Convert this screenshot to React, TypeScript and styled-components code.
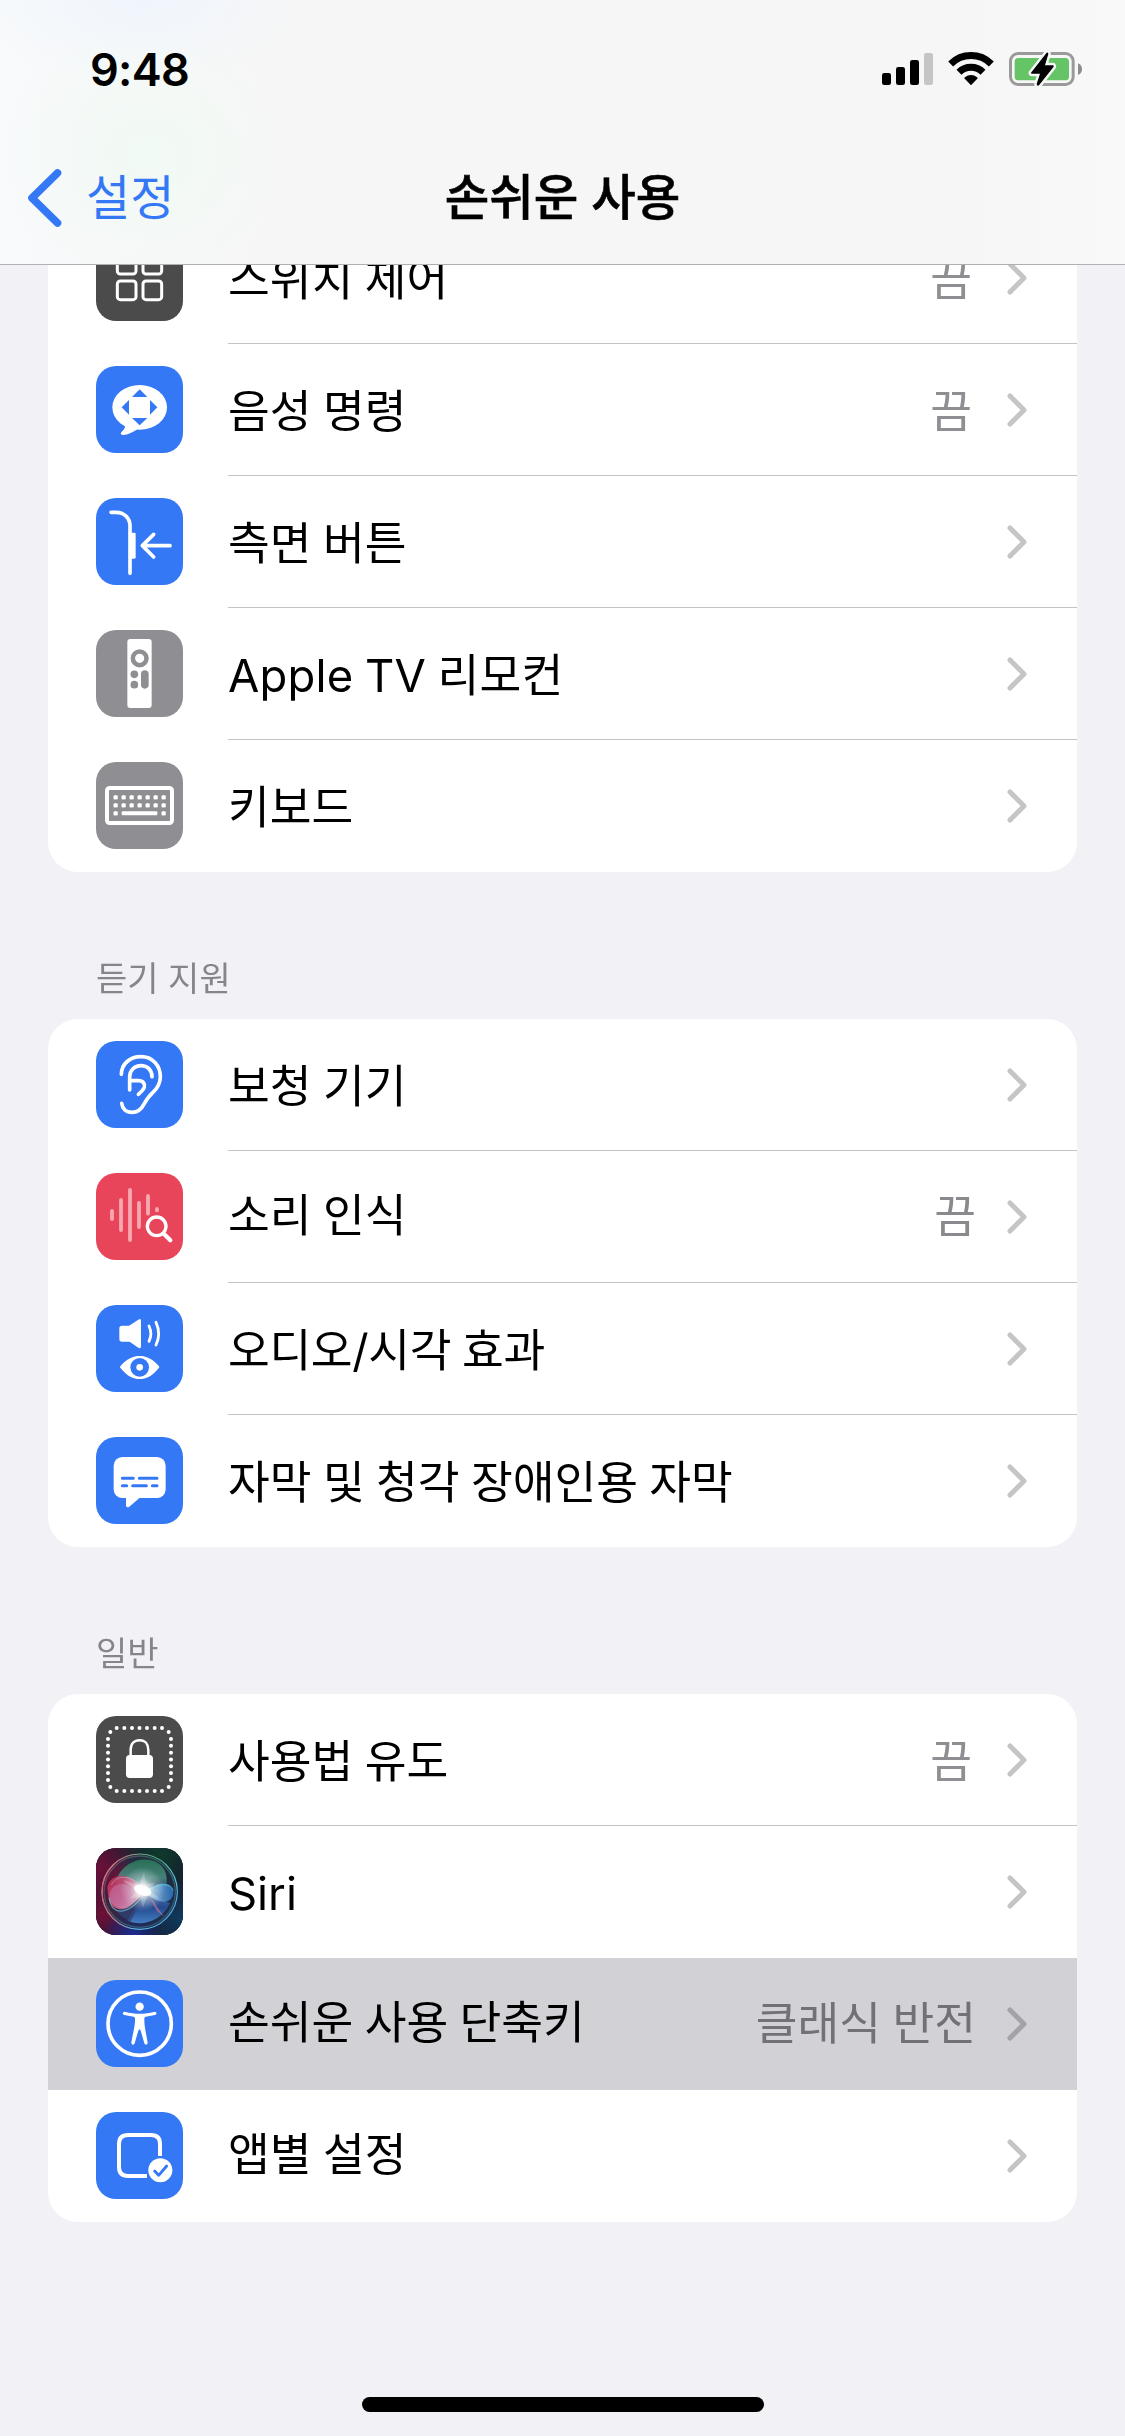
import React from "react";
import styled, { createGlobalStyle } from "styled-components";

const GlobalStyle = createGlobalStyle`
  * { box-sizing: border-box; }
  body {
    margin: 0;
    background: #f1f1f6;
    font-family: Inter, "Noto Sans CJK KR", sans-serif;
    color: #000;
  }
`;

const BLUE = "#3478f6";
const DARK = "#4b4b4b";
const GRAY = "#8e8e93";
const RED = "#e9455a";

const Screen = styled.div`
  width: 1125px;
  height: 2436px;
  display: flex;
  flex-direction: column;
  overflow: hidden;
  background: #f1f1f6;
`;

const Header = styled.header`
  flex: none;
  height: 265px;
  display: flex;
  flex-direction: column;
  border-bottom: 1px solid #b0b0b2;
  background:
    radial-gradient(ellipse 150px 130px at 150px 155px, rgba(240, 250, 243, 0.9), rgba(240, 250, 243, 0) 100%),
    radial-gradient(ellipse 170px 80px at 140px 0, rgba(239, 245, 253, 0.9), rgba(239, 245, 253, 0) 100%),
    linear-gradient(90deg, #f8fafb 0, #f6f6f6 280px, #f6f6f6 960px, #f9f9f9 1125px);
  z-index: 1;
`;

const StatusBar = styled.div`
  height: 132px;
  display: flex;
  justify-content: space-between;
  padding: 40px 25px 0 90px;
`;

const Clock = styled.div`
  font-size: 45px;
  font-weight: 600;
  line-height: 60px;
  letter-spacing: -0.7px;
`;

const NavBar = styled.nav`
  flex: 1;
  display: grid;
  grid-template-columns: 1fr auto 1fr;
  align-items: center;
  padding: 0 25px 0 25px;
`;

const BackButton = styled.div`
  display: flex;
  align-items: center;
  gap: 23px;
  color: ${BLUE};
  font-size: 48px;
  line-height: 64px;
`;

const Title = styled.h1`
  margin: 0;
  font-size: 48.4px;
  font-weight: 500;
  line-height: 64px;
  -webkit-text-stroke: 0.6px #000;
`;

const List = styled.main`
  flex: 1;
  min-height: 0;
  overflow: hidden;
  padding: 0 48px;
`;

const Scrolled = styled.div`
  margin-top: -53px;
`;

const SectionTitle = styled.h2`
  margin: 0;
  height: 147px;
  padding: 83px 0 0 48px;
  font-size: 34px;
  font-weight: 400;
  line-height: 48px;
  color: #85858b;
`;

const Card = styled.section`
  border-radius: 30px;
  background: #fff;
  overflow: hidden;
`;

const Row = styled.div<{ $pressed?: boolean }>`
  height: 132px;
  display: flex;
  align-items: stretch;
  padding-left: 48px;
  background: ${(p) => (p.$pressed ? "#d1d1d6" : "transparent")};
`;

const Tile = styled.div<{ $color: string }>`
  flex: none;
  width: 87px;
  height: 87px;
  margin: 22px 45px 0 0;
  border-radius: 20px;
  overflow: hidden;
  background: ${(p) => p.$color};

  svg {
    display: block;
    width: 87px;
    height: 87px;
  }
`;

const RowBody = styled.div<{ $divider: boolean }>`
  flex: 1;
  display: flex;
  align-items: center;
  padding-right: 49px;
  border-bottom: 1px solid ${(p) => (p.$divider ? "#c4c4c6" : "transparent")};
`;

const Label = styled.span<{ $raised?: boolean; $tracking?: number }>`
  flex: 1;
  font-size: 45.4px;
  line-height: 60px;
  letter-spacing: ${(p) => p.$tracking ?? 0}px;
  word-spacing: -1.4px;
  padding-top: ${(p) => (p.$raised ? 0 : 5)}px;
  padding-bottom: ${(p) => (p.$raised ? 1 : 0)}px;
  white-space: nowrap;
`;

const Value = styled(Label)<{ $inset: number }>`
  flex: none;
  padding-bottom: 0;
  color: ${(p) => (p.$raised ? "#8a8a8e" : GRAY)};
  mix-blend-mode: multiply;
  margin-right: ${(p) => p.$inset}px;
`;

const HomeArea = styled.footer`
  flex: none;
  height: 39px;
  display: flex;
  justify-content: center;
  align-items: flex-start;
`;

const HomeBar = styled.div`
  width: 402px;
  height: 15px;
  border-radius: 8px;
  background: #000;
`;

const Chevron = ({ color }: { color: string }) => (
  <svg width="22" height="36" viewBox="0 0 22 36" fill="none" stroke={color} strokeWidth="5" strokeLinecap="round" strokeLinejoin="round">
    <path d="M4 4 L18 18 L4 32" />
  </svg>
);

const BackChevron = () => (
  <svg width="38" height="60" viewBox="0 0 38 60" fill="none" stroke={BLUE} strokeWidth="7.6" strokeLinecap="round" strokeLinejoin="round">
    <path d="M32.5 5 L7 30 L32.5 55" />
  </svg>
);

const StatusIcons = () => (
  <svg width="240" height="60" viewBox="0 0 720 180">
    <rect x="66" y="99" width="27" height="36" rx="7" />
    <rect x="108" y="81" width="27" height="54" rx="7" />
    <rect x="150" y="60" width="27" height="75" rx="7" />
    <rect x="192" y="39" width="27" height="96" rx="7" fill="#c5c5c5" />
    <g fill="none" stroke="#000" strokeWidth="21">
      <path d="M272 72 A86 86 0 0 1 394 72" />
      <path d="M297 97 A51 51 0 0 1 369 97" />
    </g>
    <path d="M333 133 L315 114 Q333 100 351 114 Z" stroke="#000" strokeWidth="4" strokeLinejoin="round" />
    <rect x="451.5" y="40.5" width="188" height="93" rx="23" fill="none" stroke="#9a9a9a" strokeWidth="9" />
    <rect x="464" y="54" width="163" height="67" rx="11" fill="#65c466" />
    <path d="M654 70 Q666 75 666 87.500 Q666 100 654 105 Z" fill="#8c8c8c" />
    <path
      d="M560 38 L513 98 Q512 101 516 101 H540 L530 132 Q531 140 537 136 L581 80 Q582 76 578 76 H555 L565 42 Q565 36 560 38 Z"
      stroke="#f6f6f6"
      strokeWidth="15"
      strokeLinejoin="round"
      paintOrder="stroke"
    />
  </svg>
);

const Glyph = ({ children }: { children: React.ReactNode }) => <svg viewBox="0 0 261 261">{children}</svg>;

const SwitchGlyph = () => (
  <Glyph>
    <g fill="none" stroke="#fff" strokeWidth="9">
      {[64, 141].map((x) => [64, 141].map((y) => <rect key={`${x}-${y}`} x={x} y={y} width="56" height="56" rx="9" />))}
    </g>
  </Glyph>
);

const VoiceGlyph = () => (
  <Glyph>
    <ellipse cx="131" cy="124" rx="82" ry="67" fill="#fff" />
    <path d="M88 175 C88 188 82 193 76 199 C72 204 76 208 84 207 C98 205 113 197 126 188 Z" fill="#fff" />
    <g fill={BLUE}>
      <path d="M131 70 L154 93 H108 Z" />
      <path d="M131 178 L154 156 H108 Z" />
      <path d="M77 124 L99 102 V146 Z" />
      <path d="M184 124 L162 102 V146 Z" />
    </g>
  </Glyph>
);

const SideButtonGlyph = () => (
  <Glyph>
    <g fill="none" stroke="#fff" strokeWidth="11" strokeLinecap="round" strokeLinejoin="round">
      <path d="M45 43 H60 C84 43 102 60 102 84 V226" />
      <path d="M222 143 H140 M173 109 L139 143 L173 177" />
    </g>
    <rect x="100" y="104" width="19" height="78" rx="4" fill="#fff" />
  </Glyph>
);

const RemoteGlyph = () => (
  <Glyph>
    <rect x="94" y="27" width="73" height="207" rx="9" fill="#fff" />
    <circle cx="131" cy="85" r="20.500" fill="none" stroke={GRAY} strokeWidth="13.500" />
    <g fill={GRAY}>
      <circle cx="115" cy="133" r="11.500" />
      <circle cx="115" cy="164" r="11.500" />
      <rect x="135" y="121" width="23" height="55" rx="11.500" />
    </g>
  </Glyph>
);

const KeyboardGlyph = () => (
  <Glyph>
    <rect x="33" y="78" width="195" height="105" rx="8" fill="none" stroke="#fff" strokeWidth="12" />
    <g fill="#fff">
      {[59, 83, 107, 131, 155, 179, 203].map((x) =>
        [106, 130].map((y) => <rect key={`${x}-${y}`} x={x - 6.5} y={y - 6.5} width="13" height="13" rx="4" />)
      )}
      <rect x="52.500" y="147.500" width="13" height="13" rx="4" />
      <rect x="196.500" y="147.500" width="13" height="13" rx="4" />
      <rect x="77" y="148" width="107" height="12" rx="3" />
    </g>
  </Glyph>
);

const EarGlyph = () => (
  <Glyph>
    <g fill="none" stroke="#fff" strokeWidth="11" strokeLinecap="round" strokeLinejoin="round">
      <path d="M76 100 C76 68 103 47 135 47 C170 47 193 74 193 107 C193 130 184 142 170 155 C158 166 151 177 143 191 C136 205 125 214 108 214 C90 214 79 203 77 187" />
      <path d="M168 107 C168 87 154 74 135 74 C116 74 101 87 101 108 V147" />
      <path d="M101 119 H127 C142 119 148 129 145 139 C143 146 135 153 127 160" />
    </g>
  </Glyph>
);

const SoundGlyph = () => (
  <Glyph>
    <g stroke="#f6a7b0" strokeWidth="11.500" strokeLinecap="round">
      <path d="M48 114 V138 M75 81 V171 M102 51 V201 M129 90 V162 M156 69 V122 M183 108 V112" />
    </g>
    <circle cx="183" cy="160" r="39" fill={RED} />
    <circle cx="182" cy="160" r="28" fill="none" stroke="#fff" strokeWidth="10" />
    <path d="M204 183 L223 202" stroke="#fff" strokeWidth="12.500" strokeLinecap="round" />
  </Glyph>
);

const AudioVisualGlyph = () => (
  <Glyph>
    <path d="M78 62 H99 L127 44 Q135 39 135 48 V124 Q135 133 127 128 L101 110 H78 Q70 110 70 102 V70 Q70 62 78 62 Z" fill="#fff" />
    <g fill="none" stroke="#fff" strokeWidth="8.500" strokeLinecap="round">
      <path d="M159 63 Q170 86 159 109" />
      <path d="M180 52 Q196 86 180 120" />
    </g>
    <path d="M73 188 Q71 186 73 184 C94 160 112 153 131 153 C150 153 168 160 189 184 Q191 186 189 188 C168 214 150 222 131 222 C112 222 94 214 73 188 Z" fill="#fff" />
    <circle cx="131" cy="187" r="28" fill={BLUE} />
    <circle cx="131" cy="187" r="10" fill="#fff" />
  </Glyph>
);

const CaptionGlyph = () => (
  <Glyph>
    <rect x="53" y="60" width="156" height="123" rx="26" fill="#fff" />
    <path d="M90 180 V206 Q92 214 100 209 L133 181 Z" fill="#fff" />
    <g stroke={BLUE} strokeWidth="9" strokeLinecap="round">
      <path d="M79 124 H112 M130 124 H183 M79 146 H92 M110 146 H151 M169 146 H183" />
    </g>
  </Glyph>
);

const guidedDots: [number, number][] = [
  ...[62, 85, 108, 130.5, 153, 176, 198].flatMap((x): [number, number][] => [[x, 36], [x, 225]]),
  ...[69, 89, 110, 130.5, 151, 171, 192].flatMap((y): [number, number][] => [[36, y], [225, y]]),
  [43, 48], [218, 48], [43, 213], [218, 213],
];

const GuidedGlyph = () => (
  <Glyph>
    <g fill="#fff">
      {guidedDots.map(([x, y]) => <circle key={`${x}-${y}`} cx={x} cy={y} r="6" />)}
      <rect x="90" y="117" width="81" height="69" rx="11" />
    </g>
    <path d="M104 119 V102 C104 84 114 73 131 73 C147 73 157 84 157 102 V119" fill="none" stroke="#fff" strokeWidth="7.500" />
  </Glyph>
);

const SiriGlyph = () => (
  <Glyph>
    <defs>
      <radialGradient id="sTL"><stop offset="0" stopColor="#6d1038" /><stop offset="1" stopColor="#6d1038" stopOpacity="0" /></radialGradient>
      <radialGradient id="sTR"><stop offset="0" stopColor="#0e3a2c" /><stop offset="1" stopColor="#0e3a2c" stopOpacity="0" /></radialGradient>
      <radialGradient id="sB"><stop offset="0" stopColor="#1d2c94" /><stop offset="1" stopColor="#1d2c94" stopOpacity="0" /></radialGradient>
      <radialGradient id="sBR"><stop offset="0" stopColor="#103a5c" /><stop offset="1" stopColor="#103a5c" stopOpacity="0" /></radialGradient>
      <linearGradient id="sRing" x1="0" y1="0" x2="1" y2="1">
        <stop offset="0" stopColor="#d38c93" /><stop offset="0.350" stopColor="#5da88a" /><stop offset="0.700" stopColor="#57c0d0" /><stop offset="1" stopColor="#5b9be8" />
      </linearGradient>
      <linearGradient id="sRingL" x1="0" y1="0" x2="1" y2="0">
        <stop offset="0" stopColor="#e0607c" /><stop offset="0.450" stopColor="#e0607c" stopOpacity="0" />
      </linearGradient>
      <linearGradient id="sGreen" x1="0" y1="0" x2="0" y2="1">
        <stop offset="0" stopColor="#2b7a59" /><stop offset="0.550" stopColor="#4b8f83" /><stop offset="1" stopColor="#243f70" />
      </linearGradient>
      <linearGradient id="sBlue" x1="0" y1="0" x2="0" y2="1">
        <stop offset="0" stopColor="#5f7fae" /><stop offset="0.500" stopColor="#24509c" /><stop offset="1" stopColor="#4a8bd6" />
      </linearGradient>
      <linearGradient id="sPink" x1="0" y1="0" x2="1" y2="0.600">
        <stop offset="0" stopColor="#b82a50" /><stop offset="0.600" stopColor="#cf5a85" /><stop offset="1" stopColor="#e3b0c6" />
      </linearGradient>
      <linearGradient id="sLobe" x1="0" y1="0" x2="1" y2="0">
        <stop offset="0" stopColor="#a9d4ee" /><stop offset="1" stopColor="#2a70be" />
      </linearGradient>
      <radialGradient id="sGlow">
        <stop offset="0" stopColor="#fff" /><stop offset="0.220" stopColor="#fff" stopOpacity="0.850" /><stop offset="0.550" stopColor="#e8f6f4" stopOpacity="0.350" /><stop offset="1" stopColor="#fff" stopOpacity="0" />
      </radialGradient>
      <clipPath id="sClip"><circle cx="131" cy="131" r="111" /></clipPath>
    </defs>
    <rect width="261" height="261" fill="#171a30" />
    <circle cx="10" cy="60" r="150" fill="url(#sTL)" />
    <circle cx="20" cy="200" r="120" fill="url(#sTL)" />
    <circle cx="190" cy="20" r="130" fill="url(#sTR)" />
    <circle cx="250" cy="210" r="130" fill="url(#sBR)" />
    <circle cx="110" cy="262" r="90" fill="url(#sB)" />
    <g clipPath="url(#sClip)">
      <circle cx="131" cy="131" r="111" fill="#25304a" opacity="0.600" />
      <circle cx="60" cy="100" r="80" fill="url(#sTL)" />
      <path d="M62 92 C82 45 135 22 180 42 C212 58 219 92 206 132 H70 Z" fill="url(#sGreen)" opacity="0.850" />
      <path d="M148 132 L94 216 C124 236 194 228 222 166 Z" fill="url(#sBlue)" opacity="0.850" />
      <path d="M148 132 L60 190 C80 210 94 216 104 220 Z" fill="#314070" opacity="0.800" />
      <path d="M34 118 C42 78 92 72 122 104 L150 132 L112 166 C88 194 46 188 38 154 Z" fill="url(#sPink)" opacity="0.900" />
      <ellipse cx="78" cy="144" rx="38" ry="36" fill="#c98cc0" opacity="0.400" />
      <path d="M46 110 C70 70 120 88 150 132" fill="none" stroke="#9fd5cf" strokeWidth="3" opacity="0.500" />
      <path d="M40 150 C46 206 98 204 148 134" fill="none" stroke="#77c9d8" strokeWidth="4" opacity="0.650" />
      <path d="M148 132 C178 100 228 96 232 132 C232 164 196 176 148 134 Z" fill="url(#sLobe)" opacity="0.850" />
      <path d="M158 132 C180 108 224 100 231 128" fill="none" stroke="#4fd0d6" strokeWidth="3" opacity="0.800" />
      <path d="M158 140 L204 206 L182 188 Z" fill="#b56a94" opacity="0.750" />
    </g>
    <circle cx="131" cy="131" r="113" fill="none" stroke="url(#sRing)" strokeWidth="3.500" />
    <circle cx="131" cy="131" r="113" fill="none" stroke="url(#sRingL)" strokeWidth="3.500" />
    <circle cx="131" cy="131" r="107" fill="none" stroke="url(#sRing)" strokeWidth="4" opacity="0.350" />
    <circle cx="140" cy="124" r="66" fill="url(#sGlow)" />
    <path d="M144 72 L150 112 L178 102 L162 128 L190 150 L154 144 L140 180 L134 146 L100 152 L122 130 L80 96 L130 112 Z" fill="#fff" opacity="0.220" />
    <ellipse cx="140" cy="127" rx="27" ry="15" fill="#fff" opacity="0.900" transform="rotate(20 140 127)" />
  </Glyph>
);

const AccessibilityGlyph = () => (
  <Glyph>
    <circle cx="131" cy="131" r="95" fill="none" stroke="#fff" strokeWidth="11" />
    <circle cx="131" cy="80" r="12.500" fill="#fff" />
    <path
      d="M86 95 C102 99 117 101 131 101 C145 101 160 99 176 95 C183 95 183 104 177 105 L149 110 C145 111 145 114 145 120 C145 140 149 152 155 188 C155 195 147 196 145 190 L134 152 C132 146 129 146 127 152 L116 190 C114 196 106 195 106 188 C112 152 117 140 117 120 C117 114 117 111 113 110 L85 105 C79 104 79 95 86 95 Z"
      fill="#fff"
    />
  </Glyph>
);

const PerAppGlyph = () => (
  <Glyph>
    <path d="M192 132 V96 C192 78 183 69 165 69 H96 C78 69 69 78 69 96 V165 C69 183 78 192 96 192 H153" fill="none" stroke="#fff" strokeWidth="12" />
    <circle cx="193" cy="175" r="42" fill={BLUE} />
    <circle cx="193" cy="175" r="36" fill="#fff" />
    <path d="M176 177 L188 190 L212 162" fill="none" stroke={BLUE} strokeWidth="8.500" strokeLinecap="round" strokeLinejoin="round" />
  </Glyph>
);

type Item = {
  label: string;
  color: string;
  icon: React.ReactNode;
  value?: string;
  pressed?: boolean;
  raised?: boolean;
  tracking?: number;
};

type Section = { title?: string; items: Item[] };

const sections: Section[] = [
  {
    items: [
      { label: "스위치 제어", value: "끔", color: DARK, icon: <SwitchGlyph /> },
      { label: "음성 명령", value: "끔", color: BLUE, icon: <VoiceGlyph /> },
      { label: "측면 버튼", color: BLUE, icon: <SideButtonGlyph /> },
      { label: "Apple TV 리모컨", color: GRAY, icon: <RemoteGlyph />, tracking: 0.2 },
      { label: "키보드", color: GRAY, icon: <KeyboardGlyph /> },
    ],
  },
  {
    title: "듣기 지원",
    items: [
      { label: "보청 기기", color: BLUE, icon: <EarGlyph /> },
      { label: "소리 인식", value: "끔", color: RED, icon: <SoundGlyph />, raised: true },
      { label: "오디오/시각 효과", color: BLUE, icon: <AudioVisualGlyph />, tracking: -0.35 },
      { label: "자막 및 청각 장애인용 자막", color: BLUE, icon: <CaptionGlyph /> },
    ],
  },
  {
    title: "일반",
    items: [
      { label: "사용법 유도", value: "끔", color: DARK, icon: <GuidedGlyph /> },
      { label: "Siri", color: "#171a30", icon: <SiriGlyph /> },
      { label: "손쉬운 사용 단축키", value: "클래식 반전", color: BLUE, icon: <AccessibilityGlyph />, pressed: true, raised: true },
      { label: "앱별 설정", color: BLUE, icon: <PerAppGlyph />, raised: true },
    ],
  },
];

export default function App() {
  return (
    <Screen>
      <GlobalStyle />
      <Header>
        <StatusBar>
          <Clock>9:48</Clock>
          <StatusIcons />
        </StatusBar>
        <NavBar>
          <BackButton>
            <BackChevron />
            설정
          </BackButton>
          <Title>손쉬운 사용</Title>
        </NavBar>
      </Header>
      <List>
        <Scrolled>
          {sections.map((section, s) => (
            <React.Fragment key={s}>
              {section.title && <SectionTitle>{section.title}</SectionTitle>}
              <Card>
                {section.items.map((item, i) => (
                  <Row key={item.label} $pressed={item.pressed}>
                    <Tile $color={item.color}>{item.icon}</Tile>
                    <RowBody $divider={i < section.items.length - 1 && !item.pressed && !section.items[i + 1].pressed}>
                      <Label $raised={item.raised} $tracking={item.tracking}>{item.label}</Label>
                      {item.value && (
                        <Value $raised={item.raised} $inset={item.raised ? 30 : 34}>
                          {item.value}
                        </Value>
                      )}
                      <Chevron color={item.pressed ? "#a2a2a7" : "#c5c5c7"} />
                    </RowBody>
                  </Row>
                ))}
              </Card>
            </React.Fragment>
          ))}
        </Scrolled>
      </List>
      <HomeArea>
        <HomeBar />
      </HomeArea>
    </Screen>
  );
}
